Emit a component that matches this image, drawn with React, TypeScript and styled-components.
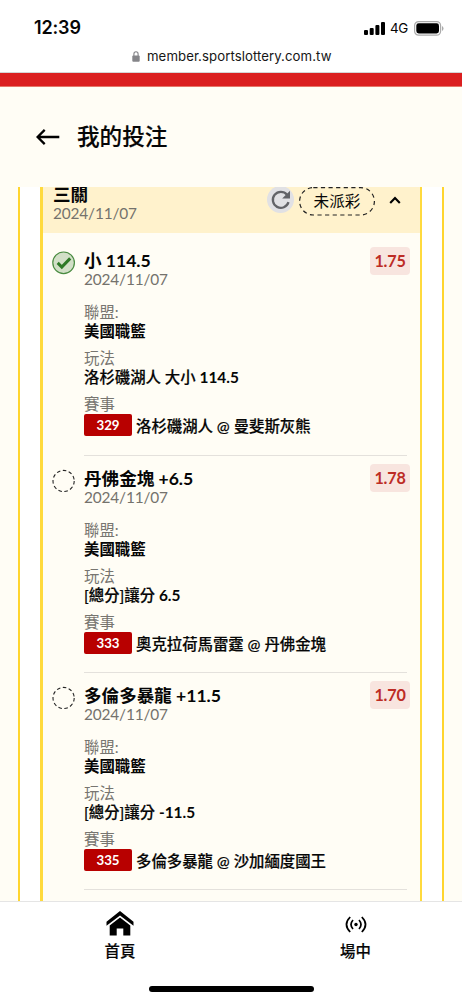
import React from "react";
import styled, { createGlobalStyle } from "styled-components";

const GlobalStyle = createGlobalStyle`
  * { box-sizing: border-box; }
  html, body { margin: 0; padding: 0; background: #fffdf5; }
  body { font-family: Lato, "Noto Sans CJK TC", sans-serif; color: #060606; overflow: hidden; }
`;

const Screen = styled.div`
  width: 462px;
  height: 1000px;
  display: flex;
  flex-direction: column;
  overflow: hidden;
  background: #fffdf5;
`;

const BrowserTop = styled.header`
  flex: none;
  height: 73px;
  background: #fff;
  border-bottom: 1px solid #d5d5d5;
  font-family: Inter, sans-serif;
`;

const StatusBar = styled.div`
  height: 45px;
  padding: 10px 18px 0 34px;
  display: flex;
  justify-content: space-between;
`;

const Clock = styled.div`
  font-size: 18px;
  font-weight: 600;
  line-height: 36px;
  letter-spacing: -0.15px;
`;

const Signals = styled.div`
  display: flex;
  align-items: center;
  height: 36px;
`;

const Network = styled.span`
  width: 18px;
  margin: 0 6px 0 5px;
  font-size: 13.4px;
  letter-spacing: -0.4px;
`;

const Address = styled.div`
  display: flex;
  align-items: center;
  height: 22px;
  padding-left: 132px;
  gap: 7px;
  font-size: 13.2px;
  color: #161616;
  white-space: nowrap;
`;

const UrlText = styled.span`
  letter-spacing: 0.07px;
`;

const RedBar = styled.div`
  flex: none;
  height: 14px;
  background: #db1f20;
  border-bottom: 1px solid #e67668;
`;

const PageHeader = styled.div`
  flex: none;
  height: 100px;
  padding: 0 36px;
  display: flex;
  align-items: center;
  gap: 17px;
`;

const PageTitle = styled.h1`
  margin: 0;
  font-size: 22.6px;
  line-height: 30px;
  font-weight: 500;
  -webkit-text-stroke: 0.15px currentColor;
`;

const Scroller = styled.main`
  flex: 1;
  min-height: 0;
  overflow: hidden;
  padding: 0 18px;
  display: flex;
`;

const Outer = styled.div`
  flex: 1;
  background: #fff;
  border: solid #ffd52e;
  border-width: 0 2px;
  padding: 0 20px;
`;

const Slip = styled.section`
  height: 100%;
  overflow: hidden;
  background: #fffdf5;
  border: solid #ffda3d;
  border-width: 0 2px 0 3px;
`;

const SlipHeader = styled.div`
  height: 46px;
  padding: 0 19px 0 10px;
  background: #fff2cc;
  display: flex;
  align-items: flex-start;
`;

const SlipName = styled.div`
  flex: 1;
  font-size: 17.6px;
  line-height: 18px;
  font-weight: 700;
  margin-top: -1px;
`;

const DateText = styled.div`
  font-size: 15.4px;
  line-height: 19px;
  font-weight: 400;
  letter-spacing: -0.15px;
  color: #74726c;
`;

const Refresh = styled.div`
  width: 27px;
  height: 27px;
  margin-top: -1px;
  border-radius: 50%;
  background: #e1e1e4;
  display: flex;
  align-items: center;
  justify-content: center;
`;

const Pill = styled.div`
  position: relative;
  width: 76px;
  height: 29px;
  margin: 0 14px 0 5px;
  font-size: 15.6px;
  line-height: 28px;
  text-align: center;
`;

const PillOutline = styled.svg`
  position: absolute;
  inset: 0;
`;

const Chevron = styled.svg`
  margin-top: 9px;
`;

const Leg = styled.article<{ $first?: boolean }>`
  display: grid;
  grid-template-columns: 24px 1fr;
  column-gap: 8px;
  padding: ${(p) => (p.$first ? 18.4 : 13)}px 13px 0 9px;
`;

const State = styled.svg`
  display: block;
`;

const LegBody = styled.div`
  height: 204.3px;
  border-bottom: 1px solid #e4e1dc;
`;

const LegHead = styled.div`
  display: flex;
  justify-content: space-between;
  height: 52px;
  margin-right: -3px;
`;

const Pick = styled.div`
  font-size: 17.6px;
  line-height: 19px;
  font-weight: 700;
  letter-spacing: -0.03px;
  white-space: nowrap;
`;

const Odds = styled.div`
  width: 40px;
  height: 28px;
  margin-top: -4.6px;
  border-radius: 4px;
  background: #f8e5df;
  color: #bd2c25;
  font-size: 16.2px;
  line-height: 28px;
  font-weight: 700;
  letter-spacing: -0.2px;
  text-align: center;
`;

const Label = styled.div`
  font-size: 15.4px;
  line-height: 19px;
  color: #777570;
`;

const Value = styled.div<{ $weight: number }>`
  height: 27px;
  font-size: 15.4px;
  line-height: 19px;
  font-weight: ${(p) => p.$weight};
  -webkit-text-stroke: ${(p) => (p.$weight < 700 ? 0.18 : 0)}px currentColor;
  white-space: nowrap;
`;

const Line = styled.b`
  font-weight: 700;
  -webkit-text-stroke: 0;
`;

const Match = styled.div`
  display: flex;
  align-items: center;
  gap: 4px;
  height: 22px;
  font-size: 15.4px;
  font-weight: 500;
  white-space: nowrap;
`;

const Teams = styled.span`
  -webkit-text-stroke: 0.18px currentColor;
`;

const Code = styled.span`
  width: 48px;
  height: 22px;
  border-radius: 2px;
  background: #b80000;
  color: #fff;
  font-size: 13.3px;
  line-height: 22px;
  font-weight: 700;
  text-align: center;
`;

const TabBar = styled.nav`
  flex: none;
  height: 99px;
  background: #fff;
  border-top: 1px solid #e5e5e5;
  display: flex;
  flex-direction: column;
  align-items: center;
`;

const Tabs = styled.div`
  width: 100%;
  height: 84px;
  display: grid;
  grid-template-columns: 240px 231px;
`;

const Tab = styled.div`
  display: flex;
  flex-direction: column;
  align-items: center;
  padding-top: 9px;
  font-size: 15.4px;
  line-height: 24px;
  font-weight: 500;
  -webkit-text-stroke: 0.15px currentColor;
  gap: 3px;
`;

const HomeIndicator = styled.div`
  width: 165px;
  height: 6px;
  border-radius: 3px;
  background: #000;
`;

const SignalIcon = () => (
  <svg width="21" height="13" viewBox="0 0 21 13">
    <rect x="0" y="8" width="4" height="5" rx="1.1" />
    <rect x="5.7" y="6" width="4" height="7" rx="1.1" />
    <rect x="11.4" y="3" width="4" height="10" rx="1.1" />
    <rect x="17" y="0" width="4" height="13" rx="1.1" />
  </svg>
);

const BatteryIcon = () => (
  <svg width="30" height="15" viewBox="0 0 30 15">
    <rect x="0.6" y="0.6" width="26" height="13.6" rx="4" fill="#fff" stroke="#aaa" strokeWidth="1.2" />
    <rect x="2.3" y="2.3" width="22.7" height="10.2" rx="2.4" />
    <path d="M28 5v5q1.5-.7 1.5-2.5T28 5" fill="#aaa" />
  </svg>
);

const LockIcon = () => (
  <svg width="8" height="11" viewBox="0 0 8 11">
    <rect x="0.3" y="4.6" width="7.4" height="6.2" rx="1" fill="#858589" />
    <path d="M1.9 5V2.9a2.1 2.1 0 0 1 4.2 0V5" fill="none" stroke="#858589" strokeWidth="1.1" />
  </svg>
);

const BackIcon = () => (
  <svg width="24" height="18" viewBox="0 0 24 18" fill="none" stroke="#000" strokeWidth="2.3">
    <path d="M23.3 9H2M8.7 1.9 1.6 9l7.1 7.1" />
  </svg>
);

const RefreshIcon = () => (
  <svg width="20" height="20" viewBox="0 0 20 20" fill="none">
    <path d="M17.5 12.2A8 8 0 1 1 16 4.7" stroke="#626367" strokeWidth="2.3" />
    <path d="M19 .8v7.7h-7.8z" fill="#626367" />
  </svg>
);

const HomeIcon = () => (
  <svg width="28" height="25" viewBox="0 0 28 25">
    <path d="M14 0 .5 10.8v4L14 4.5l13.5 10.3v-4z" />
    <path d="M14 6.6 3.7 14.5v10h7v-7h6.6v7h7v-10z" />
  </svg>
);

const LiveIcon = () => (
  <svg width="22" height="25" viewBox="0 0 22 25" fill="none" stroke="#000" strokeWidth="1.7">
    <circle cx="11" cy="13.5" r="1.7" fill="#000" stroke="none" />
    <path d="M8 9q-4 4.5 0 9M14 9q4 4.5 0 9M5.2 6q-7.4 7.5 0 15M16.8 6q7.4 7.5 0 15" />
  </svg>
);

const StateIcon = ({ won }: { won?: boolean }) => (
  <State width="24" height="24" viewBox="0 0 24 24" fill="none">
    {won ? (
      <>
        <circle cx="11.6" cy="11.8" r="10.8" fill="#d2dfc7" stroke="#498b40" strokeWidth="1.2" />
        <path d="m5.7 11.9 4.1 4.1 8.4-8.6" stroke="#2e7926" strokeWidth="3" />
      </>
    ) : (
      <circle cx="11.6" cy="12" r="10.6" stroke="#242424" strokeWidth="1.1" strokeDasharray="3.6 2.5" />
    )}
  </State>
);

const legs = [
  { pick: "小 114.5", odds: "1.75", play: "洛杉磯湖人 大小", line: "114.5", code: "329", match: "洛杉磯湖人 @ 曼斐斯灰熊", won: true },
  { pick: "丹佛金塊 +6.5", odds: "1.78", play: "[總分]讓分", line: "6.5", code: "333", match: "奧克拉荷馬雷霆 @ 丹佛金塊" },
  { pick: "多倫多暴龍 +11.5", odds: "1.70", play: "[總分]讓分", line: "-11.5", code: "335", match: "多倫多暴龍 @ 沙加緬度國王" },
];

export default function App() {
  return (
    <Screen>
      <GlobalStyle />
      <BrowserTop>
        <StatusBar>
          <Clock>12:39</Clock>
          <Signals>
            <SignalIcon />
            <Network>4G</Network>
            <BatteryIcon />
          </Signals>
        </StatusBar>
        <Address>
          <LockIcon />
          <UrlText>member.sportslottery.com.tw</UrlText>
        </Address>
      </BrowserTop>
      <RedBar />
      <PageHeader>
        <BackIcon />
        <PageTitle>我的投注</PageTitle>
      </PageHeader>
      <Scroller>
        <Outer>
          <Slip>
            <SlipHeader>
              <SlipName>
                三關
                <DateText>2024/11/07</DateText>
              </SlipName>
              <Refresh>
                <RefreshIcon />
              </Refresh>
              <Pill>
                <PillOutline width="76" height="29" fill="none">
                  <rect x="0.6" y="0.6" width="74.8" height="27.4" rx="13.7" stroke="#222" strokeWidth="1.2" strokeDasharray="4.2 3.4" />
                </PillOutline>
                未派彩
              </Pill>
              <Chevron width="12" height="8" viewBox="0 0 12 8" fill="none">
                <path d="M1.2 7 6 2l4.8 5" stroke="#000" strokeWidth="2.1" />
              </Chevron>
            </SlipHeader>
            {legs.map((leg, i) => (
              <Leg key={leg.code} $first={i === 0}>
                <StateIcon won={leg.won} />
                <LegBody>
                  <LegHead>
                    <div>
                      <Pick>{leg.pick}</Pick>
                      <DateText>2024/11/07</DateText>
                    </div>
                    <Odds>{leg.odds}</Odds>
                  </LegHead>
                  <Label>聯盟:</Label>
                  <Value $weight={700}>美國職籃</Value>
                  <Label>玩法</Label>
                  <Value $weight={500}>
                    {leg.play} <Line>{leg.line}</Line>
                  </Value>
                  <Label>賽事</Label>
                  <Match>
                    <Code>{leg.code}</Code>
                    <Teams>{leg.match}</Teams>
                  </Match>
                </LegBody>
              </Leg>
            ))}
          </Slip>
        </Outer>
      </Scroller>
      <TabBar>
        <Tabs>
          <Tab>
            <HomeIcon />
            首頁
          </Tab>
          <Tab>
            <LiveIcon />
            場中
          </Tab>
        </Tabs>
        <HomeIndicator />
      </TabBar>
    </Screen>
  );
}
